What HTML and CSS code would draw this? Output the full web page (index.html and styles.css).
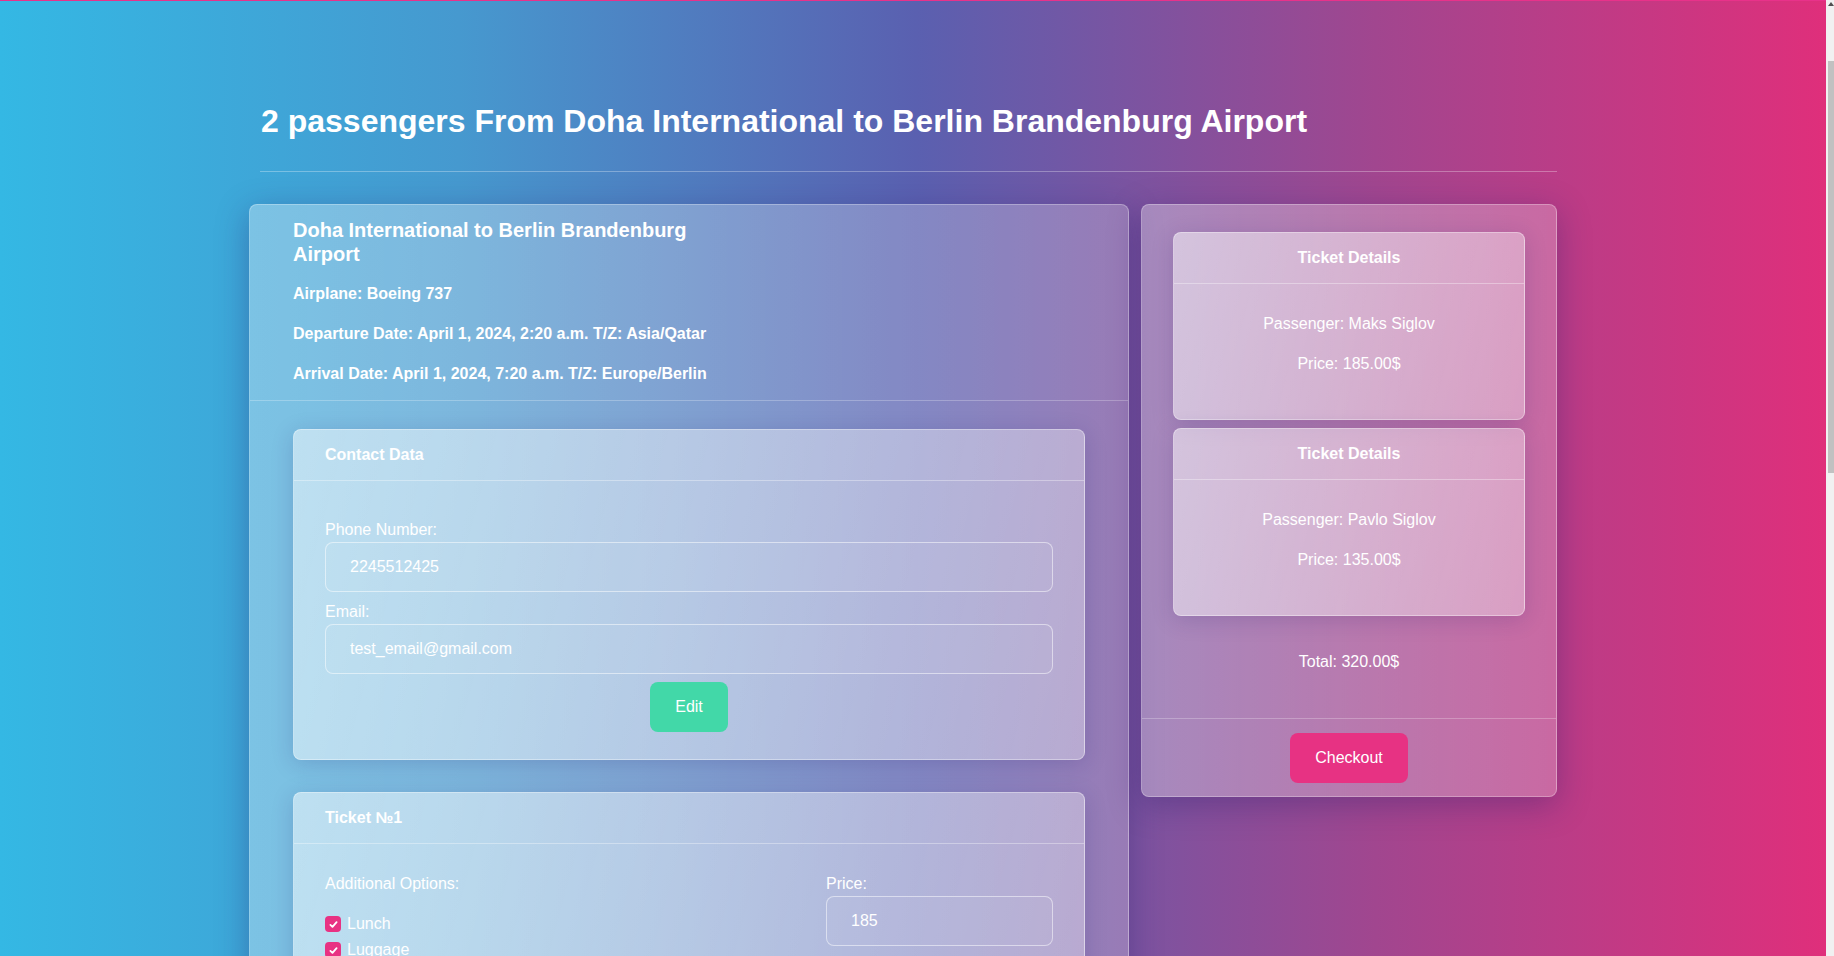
FILE: index.html
```html
<!DOCTYPE html>
<html lang="en">
<head>
<meta charset="utf-8">
<title>Booking</title>
<link rel="stylesheet" href="styles.css">
</head>
<body>
<div class="topline"></div>
<main class="page">
  <h1 class="title">2 passengers From Doha International to Berlin Brandenburg Airport</h1>
  <hr class="divider">
  <div class="layout">
    <section class="glass flight">
      <header class="flight-head">
        <div class="flight-info">
          <h2 class="flight-name">Doha International to Berlin Brandenburg Airport</h2>
          <p class="flight-line">Airplane: Boeing 737</p>
          <p class="flight-line">Departure Date: April 1, 2024, 2:20 a.m. T/Z: Asia/Qatar</p>
          <p class="flight-line">Arrival Date: April 1, 2024, 7:20 a.m. T/Z: Europe/Berlin</p>
        </div>
      </header>
      <div class="flight-body">
        <div class="card">
          <div class="card-head">Contact Data</div>
          <form class="card-body contact-form">
            <label class="field-label" for="phone">Phone Number:</label>
            <input class="field" id="phone" type="text" value="2245512425">
            <label class="field-label gap" for="email">Email:</label>
            <input class="field" id="email" type="text" value="test_email@gmail.com">
            <div class="center">
              <button type="button" class="btn btn-edit">Edit</button>
            </div>
          </form>
        </div>

        <div class="card">
          <div class="card-head">Ticket №1</div>
          <div class="card-body ticket-grid">
            <div class="options">
              <div class="field-label opt-title">Additional Options:</div>
              <label class="check"><span class="box"><svg viewBox="0 0 16 16" width="11" height="11"><path d="M3.5 8.5l3 3 6-7" fill="none" stroke="#fff" stroke-width="2.6" stroke-linecap="round" stroke-linejoin="round"/></svg></span>Lunch</label>
              <label class="check"><span class="box"><svg viewBox="0 0 16 16" width="11" height="11"><path d="M3.5 8.5l3 3 6-7" fill="none" stroke="#fff" stroke-width="2.6" stroke-linecap="round" stroke-linejoin="round"/></svg></span>Luggage</label>
            </div>
            <div class="price">
              <label class="field-label" for="price1">Price:</label>
              <input class="field" id="price1" type="text" value="185">
            </div>
          </div>
        </div>

        <div class="card">
          <div class="card-head">Ticket №2</div>
          <div class="card-body ticket-grid">
            <div class="options">
              <div class="field-label opt-title">Additional Options:</div>
              <label class="check"><span class="box off"></span>Lunch</label>
              <label class="check"><span class="box off"></span>Luggage</label>
            </div>
            <div class="price">
              <label class="field-label" for="price2">Price:</label>
              <input class="field" id="price2" type="text" value="135">
            </div>
          </div>
        </div>
      </div>
    </section>

    <aside class="glass summary">
      <div class="summary-body">
        <div class="card detail">
          <div class="card-head centered">Ticket Details</div>
          <div class="card-body detail-body">
            <p class="detail-line">Passenger: Maks Siglov</p>
            <p class="detail-line">Price: 185.00$</p>
          </div>
        </div>
        <div class="card detail">
          <div class="card-head centered">Ticket Details</div>
          <div class="card-body detail-body">
            <p class="detail-line">Passenger: Pavlo Siglov</p>
            <p class="detail-line">Price: 135.00$</p>
          </div>
        </div>
        <p class="total">Total: 320.00$</p>
      </div>
      <div class="summary-foot">
        <button type="button" class="btn btn-checkout">Checkout</button>
      </div>
    </aside>
  </div>
</main>
<div class="scrollbar" aria-hidden="true">
  <span class="scroll-arrow"></span>
  <span class="scroll-thumb"></span>
</div>
</body>
</html>
```
FILE: styles.css
```css
html {
  background: #34b8e4;
  scrollbar-width: none;
}
html::-webkit-scrollbar {
  display: none;
}
body {
  margin: 0;
  min-height: 2200px;
  font-family: "Liberation Sans", Arial, sans-serif;
  font-size: 16px;
  line-height: 24px;
  color: #fff;
  background: linear-gradient(to right, #34b8e4 0%, #4699cf 25%, #5a60b0 50%, #a1468f 75%, #df2f7b 99.5%);
}
.topline {
  height: 1px;
  background: #e8328a;
}
.page {
  width: 1297px;
  margin-left: calc(50% - 657px);
  padding-top: 101px;
  padding-bottom: 120px;
}
.title {
  margin: 0;
  font-size: 32px;
  line-height: 38px;
  font-weight: 700;
  padding-left: 1px;
}
.divider {
  margin: 31px 0 32px;
  border: 0;
  height: 1px;
  background: rgba(255, 255, 255, 0.3);
}
.layout {
  display: flex;
  align-items: flex-start;
  gap: 12px;
  margin-left: -11px;
}
.glass {
  border: 1px solid rgba(255, 255, 255, 0.28);
  border-radius: 8px;
  background: linear-gradient(to right, rgba(255, 255, 255, 0.32), rgba(255, 255, 255, 0.23));
  box-shadow: 0 8px 32px rgba(40, 30, 110, 0.35);
}
.flight {
  width: 880px;
  box-sizing: border-box;
}
.summary {
  width: 416px;
  box-sizing: border-box;
}
.flight-head {
  padding: 13px 43px 14px;
  border-bottom: 1px solid rgba(255, 255, 255, 0.25);
}
.flight-info {
  width: 440px;
}
.flight-name {
  margin: 0 0 16px;
  font-size: 20px;
  line-height: 24px;
  font-weight: 700;
}
.flight-line {
  margin: 0 0 16px;
  font-weight: 700;
}
.flight-line:last-child {
  margin-bottom: 0;
}
.flight-body {
  padding: 28px 43px 40px;
  display: flex;
  flex-direction: column;
  gap: 32px;
}
.card {
  border: 1px solid rgba(255, 255, 255, 0.35);
  border-radius: 8px;
  background: linear-gradient(105deg, rgba(255, 255, 255, 0.5), rgba(255, 255, 255, 0.34));
  box-shadow: 0 4px 22px rgba(40, 30, 110, 0.18);
}
.card-head {
  padding: 13px 31px;
  font-weight: 700;
  border-bottom: 1px solid rgba(255, 255, 255, 0.35);
}
.card-head.centered {
  text-align: center;
}
.card-body {
  padding: 28px 31px 27px;
}
.contact-form {
  margin: 0;
  padding-top: 37px;
}
.field-label {
  display: block;
}
.field-label.gap {
  margin-top: 8px;
}
.field {
  display: block;
  box-sizing: border-box;
  width: 100%;
  height: 50px;
  margin: 0;
  padding: 0 24px;
  border: 1px solid rgba(255, 255, 255, 0.5);
  border-radius: 8px;
  background: rgba(255, 255, 255, 0.04);
  font-family: inherit;
  font-size: 16px;
  color: #fff;
  outline: none;
}
.center {
  display: flex;
  justify-content: center;
  margin-top: 8px;
}
.btn {
  height: 50px;
  border: 0;
  border-radius: 8px;
  font-family: inherit;
  font-size: 16px;
  color: #fff;
  cursor: pointer;
}
.btn-edit {
  width: 78px;
  background: #42d8a8;
}
.btn-checkout {
  width: 118px;
  background: #e73283;
}
.ticket-grid {
  display: grid;
  grid-template-columns: 1fr 227px;
  column-gap: 24px;
}
.opt-title {
  margin-bottom: 16px;
}
.check {
  display: flex;
  align-items: center;
  gap: 6px;
  height: 24px;
  margin-bottom: 2px;
}
.box {
  width: 16px;
  height: 16px;
  border-radius: 4px;
  background: #e83283;
  display: flex;
  align-items: center;
  justify-content: center;
}
.box.off {
  background: rgba(255, 255, 255, 0.6);
}
.summary-body {
  padding: 27px 31px 44px;
  display: flex;
  flex-direction: column;
  gap: 8px;
}
.detail-body {
  padding: 28px 20px 27px;
  text-align: center;
}
.detail-line {
  margin: 0 0 16px;
}
.total {
  margin: 26px 0 0;
  text-align: center;
}
.summary-foot {
  border-top: 1px solid rgba(255, 255, 255, 0.25);
  padding: 14px 0 13px;
  display: flex;
  justify-content: center;
}
.scrollbar {
  position: fixed;
  top: 0;
  right: 0;
  width: 8px;
  height: 100%;
  background: #f1f1f1;
}
.scroll-arrow {
  position: absolute;
  top: 2px;
  left: 2px;
  border-left: 3px solid transparent;
  border-right: 3px solid transparent;
  border-bottom: 4px solid #505050;
}
.scroll-thumb {
  position: absolute;
  top: 61px;
  left: 2px;
  width: 6px;
  height: 412px;
  background: #c1c1c1;
}
```
